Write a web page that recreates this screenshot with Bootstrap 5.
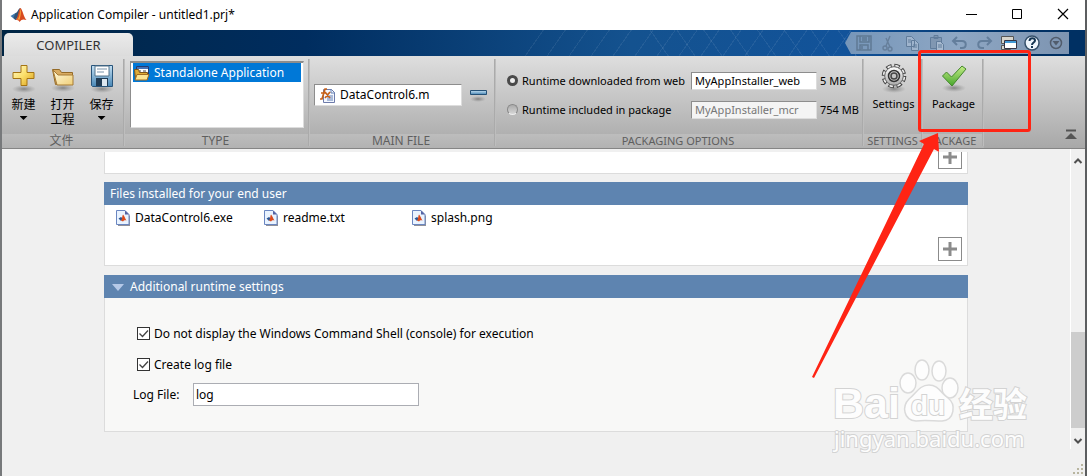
<!DOCTYPE html>
<html lang="zh-CN">
<head>
<meta charset="utf-8">
<meta name="viewport" content="width=device-width, initial-scale=1">
<title>Application Compiler - untitled1.prj*</title>
<link href="https://cdn.jsdelivr.net/npm/bootstrap@5.3.0/dist/css/bootstrap.min.css" rel="stylesheet">
<style>
body{font-family:"Noto Sans","Noto Sans CJK SC",sans-serif;font-size:12px;line-height:16px;color:#000;background:#f0f0f0}
button,input{font-family:inherit;color:inherit}
button{background:none;border:0;padding:0}
svg{display:block;flex:none}
.app-window{border-left:2px solid #77797b;border-right:2px solid #5c5e60;overflow:hidden}
.title-bar{height:30px}
.win-btn{width:46px;height:30px}
.tab-strip{height:26px;padding-left:2px;background:
 repeating-linear-gradient(55deg,transparent 0 21px,#ffffff12 21px 22px) 640px 0/220px 26px no-repeat,
 repeating-linear-gradient(125deg,transparent 0 17px,#ffffff12 17px 18px) 520px 0/350px 26px no-repeat,
 linear-gradient(90deg,#002544 0,#002d5f 28%,#14528f 58%,#12539a 78%,#003063 94%)}
.main-tab{width:129px;height:23px;background:linear-gradient(#ebebeb,#dcdcdc);border-radius:5px 5px 0 0;font-size:13px;color:#333}
.quick-bar{height:22px;width:224px;margin-right:16px;padding:0 2px 0 7px;background:linear-gradient(90deg,#7696b9,#8ea7c4 50%,#7d94b1);clip-path:polygon(0 50%,6px 0,100% 0,100% 100%,6px 100%)}
.quick-bar button{width:24px;height:22px}
.ribbon{height:93px;background:linear-gradient(#dedede,#c6c6c6 45%,#a8a8a8);border-bottom:1px solid #858585}
.group{position:relative}
.group::after{content:"";position:absolute;right:0;top:3px;bottom:2px;width:2px;background:linear-gradient(90deg,#a1a1a1,#c7c7c7)}
.group-body{height:78px}
.group-name{height:14px;line-height:13px;text-align:center;padding-right:4px;color:#5f5f5f;background:linear-gradient(#bdbdbd,#b2b2b2)}
.g-file{width:123px}.g-type{width:185px}.g-main{width:186px}.g-pack{width:368px}.g-set{width:59px}.g-go{width:61px}
.g-file .group-body{padding:8px 0 0 2px}
.g-type .group-body{padding:5px 0 0 5px}
.g-pack .group-body{padding:10px 0 0 11px}
.g-pack,.g-set,.g-go{font-size:11px}
.g-set .group-name,.g-go .group-name{padding-right:2px}
.tool{width:39px;line-height:15px}
.caret{width:8px;height:4px;background:#000;clip-path:polygon(0 0,100% 0,50% 100%)}
.sunken{background:#fff;border:1px solid #8d8d8d;border-bottom-color:#ddd;border-right-color:#ddd;border-radius:0}
.type-list{height:67px;width:174px;padding:0 2px;border-width:2px 1px 1px}
.type-item{background:#0078d7;color:#fff;width:100%;height:19px}
.file-box{width:148px;height:22px}
.file-box input{width:116px;border:0;outline:0;background:none;padding:0}
.opt-row{height:29px;gap:3px}
.opt-row label{width:166px;white-space:nowrap}
.opt-row input[type=text]{width:126px;height:18px;padding:0 3px}
.opt-row input[type=text]:disabled{background:#f4f4f4;color:#777}
.opt-row input[type=radio]{appearance:none;width:11px;height:11px;border:1px solid #888;border-radius:50%;background:linear-gradient(#aaa,#d7d7d7);border-bottom-color:#eee;margin:0 4px 0 0}
.opt-row input[type=radio]:checked{border:3px solid #4a4a4a;background:#eee}
.workspace{height:calc(100vh - 149px);min-height:327px;position:relative}
.pane{padding:3px 102px 0;min-width:0}
.box{background:#fff;border:1px solid #dcdcdc;border-top:0}
.head{height:23px;background:#5e84b0;color:#fff;font-size:12px;font-weight:400;line-height:16px;padding:1px 0 0 6px}
.add-btn{width:24px;height:24px;border:1px solid #8b8b8b;background:#fff;margin-right:5px}
.box-top{height:22px}.box-files{height:61px;margin-bottom:9px}
.box-set{height:134px;background:#f8f8f7;padding:20px 0 0 28px}
.file-row{padding:5px 0 0 11px}
.file-item{width:148px;gap:5px}
.check-row{height:31px;padding-left:4px;gap:4px}
.check-row input{appearance:none;width:13px;height:13px;margin:0;border:1px solid #333;background:#fff}
.check-row input:checked{background:#fff url("data:image/svg+xml,%3Csvg xmlns='http://www.w3.org/2000/svg' viewBox='0 0 11 11'%3E%3Cpath d='M1.5 5.5l3 3L10 2.5' fill='none' stroke='%23444' stroke-width='1.3'/%3E%3C/svg%3E")}
.log-row{padding-top:3px}
.log-label{width:60px}
.log-input{width:226px;height:23px;border:1px solid #abadb3;background:#fff;padding:0 2px;font-size:12px}
.scroller{width:15px;height:300px;border-left:1px solid #fff}
.thumb{height:96px;background:#cdcdcd}
.scroller button{height:21px;width:100%}
.callout{position:absolute;left:-112px;top:-7px;z-index:5;pointer-events:none}
.stamp{position:absolute;right:53px;bottom:20px}
.stamp text{paint-order:stroke;stroke:#d3d3d3;stroke-width:2px;fill:#fdfdfd}
.grip{position:absolute;right:1px;bottom:1px}
</style>
</head>
<body>
<svg width="0" height="0" class="position-absolute">
 <defs>
  <linearGradient id="gold" x2="1" y2="1"><stop stop-color="#fffbd0"/><stop offset=".5" stop-color="#fbdf69"/><stop offset="1" stop-color="#d79b19"/></linearGradient>
  <linearGradient id="pale" x2="1" y2="1"><stop stop-color="#fffbe0"/><stop offset="1" stop-color="#f0cf78"/></linearGradient>
  <linearGradient id="blue" y2="1" x2="0"><stop stop-color="#c5e0f2"/><stop offset="1" stop-color="#4887b6"/></linearGradient>
  <linearGradient id="green" y2="1" x2="0"><stop stop-color="#c5ed87"/><stop offset="1" stop-color="#46a62b"/></linearGradient>
  <linearGradient id="steel" y2="1" x2="0"><stop stop-color="#fff"/><stop offset="1" stop-color="#aaa"/></linearGradient>
  <radialGradient id="shade"><stop stop-color="#555" stop-opacity=".6"/><stop offset="1" stop-color="#777" stop-opacity="0"/></radialGradient>
  <symbol id="peak" viewBox="0 0 16 16"><path d="M0 9l5-3 3 3-3 4z" fill="#3c78ad"/><path d="M5 6c2 0 3-5 5-5L8 9l-3 4-2-2z" fill="#315476"/><path d="M10 1c2 1 3 9 6 12-3-1-5-1-7 2-1-2-2-2-4-2 3-2 3-12 5-12z" fill="#d84b20"/><path d="M10 2c1 2 0 8-1 11-1-1-2 0-3 0 3-2 3-6 4-11z" fill="#f5a23b"/></symbol>
  <symbol id="doc" viewBox="0 0 14 16"><path d="M2 2h8l4 4v10H2z" fill="#909098"/><path d="M.5.5h8.500l4 4v10H.5z" fill="#e9f3ff" stroke="#6a86c1"/><path d="M9 .5v4h4z" fill="#5362a3"/><path d="M2.500 8.500L5 7l2 1.500L5 11z" fill="#2b5794"/><path d="M7 4.500c1.500 1.500 2 4 3.500 6-1.500-.5-2.500-.5-3.500 1L5 10.500c1.500-1.500 1-4.500 2-6z" fill="#dc4a1c"/></symbol>
 </defs>
</svg>

<div class="app-window d-flex flex-column min-vh-100">
 <header class="title-bar bg-white d-flex align-items-center">
  <svg width="17" height="16" class="ms-2 me-1"><use href="#peak"/></svg>
  <span class="flex-grow-1">Application Compiler - untitled1.prj*</span>
  <button class="win-btn" aria-label="Minimize"><svg width="46" height="30"><path d="M19 14.500h11" stroke="#000"/></svg></button>
  <button class="win-btn" aria-label="Maximize"><svg width="46" height="30"><path d="M19.500 9.500h9v9h-9z" fill="none" stroke="#000"/></svg></button>
  <button class="win-btn" aria-label="Close"><svg width="46" height="30"><path d="M19 9l10 10M29 9L19 19" stroke="#000" stroke-width="1.200"/></svg></button>
 </header>

 <nav class="tab-strip d-flex align-items-end justify-content-between">
  <button class="main-tab">COMPILER</button>
  <div class="quick-bar d-flex align-self-center">
   <button aria-label="Save"><svg width="24" height="22" fill="none" stroke="#5f7994" stroke-width="1.500"><path d="M5 4h14v14H5zM8 4v6h9V4M8 18v-5h8v5M10 6h5M10 8h5M10 14v3"/></svg></button>
   <button aria-label="Cut"><svg width="24" height="22" fill="none" stroke="#667f9b" stroke-width="1.400"><path d="M14 4l-4 10M10 6l4 9"/><circle cx="9" cy="16" r="2"/><circle cx="14" cy="17" r="2"/></svg></button>
   <button aria-label="Copy"><svg width="24" height="22" fill="#9fb4cd" stroke="#617c9b"><path d="M6.500 4.500h5l3 3v7h-8zM11.500 8.500h4l3 3v7h-7zM8 8h3M8 10h3M13 13h4M13 15h4"/></svg></button>
   <button aria-label="Paste"><svg width="24" height="22" fill="#8097b2" stroke="#617c9b"><path d="M6.500 5.500h11v11h-11zM10 3.500h4v3h-4z"/><path d="M12.500 9.500h4l3 3v6h-7z" fill="#a7bad0"/><path d="M14 13h4M14 15h4"/></svg></button>
   <button aria-label="Undo"><svg width="24" height="22" fill="none" stroke="#637e9c" stroke-width="2"><path d="M9 5L5 9l4 4M6 9h8c5 0 5 7 0 7h-2"/></svg></button>
   <button aria-label="Redo"><svg width="24" height="22" fill="none" stroke="#637e9c" stroke-width="2"><path d="M15 5l4 4-4 4M18 9h-8c-5 0-5 7 0 7h2"/></svg></button>
   <button aria-label="Windows"><svg width="24" height="22"><path d="M5.500 4.500h12v7h-12zM5.500 13.500h9v4h-9z" fill="#d8d5cc" stroke="#555"/><path d="M8.500 8.500h12v8h-12z" fill="#fff" stroke="#334"/><path d="M9 9h11v2H9z" fill="#4299d5"/></svg></button>
   <button aria-label="Help"><svg width="24" height="22"><circle cx="12" cy="11" r="7" fill="#eef5fc" stroke="#35506b" stroke-width="1.500"/><path d="M9.500 9c0-4 5.500-3.500 5.500-.5 0 2-3 2-3 4.500M12 14v2" fill="none" stroke="#163653" stroke-width="2"/></svg></button>
   <button aria-label="More"><svg width="24" height="22"><circle cx="12" cy="11" r="5.500" fill="none" stroke="#515c6c" stroke-width="1.500"/><path d="M8.500 9h7L12 13.500z" fill="#515c6c"/></svg></button>
  </div>
 </nav>

 <section class="ribbon d-flex flex-shrink-0">
  <div class="group g-file flex-shrink-0">
   <div class="group-body d-flex">
    <button class="tool d-flex flex-column align-items-center"><svg width="28" height="33"><ellipse cx="14" cy="25" rx="12" ry="4" fill="url(#shade)"/><path d="M11 1.500h6v7h7v6h-7v7h-6v-7H3v-6h8z" fill="url(#gold)" stroke="#a57413"/></svg><span>新建</span><i class="caret mt-1"></i></button>
    <button class="tool d-flex flex-column align-items-center"><svg width="28" height="33"><ellipse cx="14" cy="24" rx="12" ry="4" fill="url(#shade)"/><path d="M3.500 5.500h7l2 3h11v12h-17z" fill="#d9ac62" stroke="#946a27"/><path d="M4 6l5 5h15v10H8z" fill="url(#pale)" stroke="#a67a35"/></svg><span>打开<br>工程</span></button>
    <button class="tool d-flex flex-column align-items-center"><svg width="28" height="33"><ellipse cx="14" cy="25" rx="12" ry="4" fill="url(#shade)"/><path d="M3.500 1.500h21v21h-20l-1-1z" fill="url(#blue)" stroke="#28547a"/><path d="M7 2h14v10H7z" fill="#fff" stroke="#54758c"/><path d="M9 5h10M9 8h7" stroke="#7993aa"/><path d="M8 14h12v8H8z" fill="#203b53"/><path d="M14 15h5v7h-5z" fill="#dde7ef"/></svg><span>保存</span><i class="caret mt-1"></i></button>
   </div>
   <div class="group-name">文件</div>
  </div>
  <div class="group g-type flex-shrink-0">
   <div class="group-body"><div class="sunken type-list">
    <button class="type-item d-flex align-items-center gap-1"><svg width="17" height="16"><path d="M3.500 1.500h12v8h-12z" fill="#fff" stroke="#253b72"/><path d="M4 2h11v2H4z" fill="#4572b6"/><path d="M6 6h2M10 6h3" stroke="#444"/><path d="M1.500 4.500h4l1 3h8v7h-12z" fill="#e0ac36" stroke="#80551a"/><path d="M4 9.500h12L14 15H2z" fill="#fce593" stroke="#a36c20"/></svg>Standalone Application</button>
   </div></div>
   <div class="group-name">TYPE</div>
  </div>
  <div class="group g-main flex-shrink-0">
   <div class="group-body d-flex align-items-center gap-2 ps-1">
    <label class="sunken file-box d-flex align-items-center gap-1 ps-1"><svg width="17" height="17"><path d="M4.500 2.500h8l3 3v10h-11z" fill="#f3f7ff" stroke="#6d7baa"/><path d="M12 2v4h4M8 9h6M8 11h6M8 13h6" stroke="#6380b5" fill="none"/><path d="M1 12h2L6 2h2M2 6h5M6 5l5 6M11 5l-5 6" stroke="#c76119" stroke-width="1.700" fill="none"/></svg><input type="text" value="DataControl6.m" aria-label="Main file"></label>
    <button aria-label="Remove file"><svg width="17" height="14"><ellipse cx="8" cy="11" rx="8" ry="3" fill="url(#shade)"/><path d="M.5 2.500h16v4H.5z" fill="url(#blue)" stroke="#245177"/></svg></button>
   </div>
   <div class="group-name">MAIN FILE</div>
  </div>
  <div class="group g-pack flex-shrink-0">
   <div class="group-body">
    <div class="opt-row d-flex align-items-center"><div class="d-flex align-items-center"><input type="radio" id="web" name="runtime" checked><label for="web">Runtime downloaded from web</label></div><input class="sunken" type="text" value="MyAppInstaller_web" aria-label="Web installer name"><span>5 MB</span></div>
    <div class="opt-row d-flex align-items-center"><div class="d-flex align-items-center"><input type="radio" id="mcr" name="runtime"><label for="mcr">Runtime included in package</label></div><input class="sunken" type="text" value="MyAppInstaller_mcr" aria-label="Package installer name" disabled><span class="text-nowrap">754 MB</span></div>
   </div>
   <div class="group-name">PACKAGING OPTIONS</div>
  </div>
  <div class="group g-set flex-shrink-0">
   <div class="group-body pt-1"><button class="d-flex flex-column align-items-center w-100"><svg width="30" height="36"><ellipse cx="15" cy="29" rx="12" ry="4" fill="url(#shade)"/><circle cx="15" cy="16" r="10.500" fill="none" stroke="#444" stroke-width="3.600" stroke-dasharray="5.500 2.750"/><circle cx="15" cy="16" r="10.300" fill="none" stroke="#eee" stroke-width="2" stroke-dasharray="3.500 4.590" stroke-dashoffset="-1"/><circle cx="15" cy="16" r="9.300" fill="url(#steel)" stroke="#666"/><circle cx="15" cy="16" r="5.500" fill="#ccc" stroke="#333" stroke-width="1.500"/><circle cx="15" cy="16" r="3" fill="#c4c4c4" stroke="#444" stroke-width="1.500"/></svg>Settings</button></div>
   <div class="group-name">SETTINGS</div>
  </div>
  <div class="group g-go flex-shrink-0">
   <div class="group-body pt-1"><button class="d-flex flex-column align-items-center w-100"><svg width="30" height="36"><ellipse cx="15" cy="28" rx="12" ry="4" fill="url(#shade)"/><path d="M3.500 16l4-4 5 5L23 6l4 3-14 17z" fill="url(#green)" stroke="#43872c"/></svg>Package</button></div>
   <div class="group-name">PACKAGE</div>
   <svg class="callout" width="222" height="332"><rect x="108.500" y="2.500" width="110" height="79" rx="2" fill="none" stroke="#ff2414" stroke-width="3"/><path d="M127 84l1 19-5-3L3 329l-2-1L113 95l-5-3z" fill="#ff2414"/></svg>
  </div>
  <div class="flex-grow-1 d-flex align-items-end justify-content-end p-2 pe-1"><button class="me-1" aria-label="Collapse ribbon"><svg width="12" height="11"><path d="M1 1.500h10" stroke="#555" stroke-width="2"/><path d="M0 10l6-6 6 6z" fill="#555"/></svg></button></div>
 </section>

 <div class="workspace d-flex flex-grow-1">
  <main class="pane flex-grow-1">
   <div class="box box-top d-flex justify-content-end overflow-hidden mb-2 align-items-end pb-1"><button class="add-btn flex-shrink-0" aria-label="Add file"><svg width="22" height="22"><path d="M11 4v14M4 11h14" stroke="#8b8b8b" stroke-width="3"/></svg></button></div>
   <h2 class="head d-flex align-items-center mb-0">Files installed for your end user</h2>
   <div class="box box-files d-flex flex-column justify-content-between pb-1">
    <div class="file-row d-flex">
     <div class="file-item d-flex"><svg width="14" height="16"><use href="#doc"/></svg>DataControl6.exe</div>
     <div class="file-item d-flex"><svg width="14" height="16"><use href="#doc"/></svg>readme.txt</div>
     <div class="file-item d-flex"><svg width="14" height="16"><use href="#doc"/></svg>splash.png</div>
    </div>
    <button class="add-btn align-self-end" aria-label="Add installed file"><svg width="22" height="22"><path d="M11 4v14M4 11h14" stroke="#8b8b8b" stroke-width="3"/></svg></button>
   </div>
   <h2 class="head d-flex align-items-center mb-0 gap-1"><svg width="16" height="12"><path d="M2 3h12L8 10z" fill="#b5c9e8"/></svg>Additional runtime settings</h2>
   <div class="box box-set">
    <div class="check-row d-flex align-items-center"><input type="checkbox" id="shell" checked><label for="shell">Do not display the Windows Command Shell (console) for execution</label></div>
    <div class="check-row d-flex align-items-center"><input type="checkbox" id="mklog" checked><label for="mklog">Create log file</label></div>
    <div class="log-row d-flex align-items-center"><label class="log-label" for="log">Log File:</label><input class="log-input" id="log" type="text" value="log"></div>
   </div>
  </main>
  <div class="scroller d-flex flex-column flex-shrink-0">
   <button aria-label="Scroll up"><svg width="14" height="21"><path d="M3.500 14L7 10.500l3.500 3.500" fill="none" stroke="#505050" stroke-width="2"/></svg></button>
   <div class="thumb mt-auto"></div>
   <button aria-label="Scroll down"><svg width="14" height="21"><path d="M3.500 11L7 14.500l3.500-3.500" fill="none" stroke="#505050" stroke-width="2"/></svg></button>
  </div>
  <svg class="stamp" width="200" height="100" font-family="Liberation Sans, sans-serif">
   <g fill="#fdfdfd" stroke="#dadada" stroke-width="1.500"><ellipse cx="76" cy="27" rx="8" ry="10"/><ellipse cx="90" cy="14" rx="7" ry="10"/><ellipse cx="107" cy="15" rx="7" ry="10"/><ellipse cx="118" cy="32" rx="8" ry="10"/><path d="M97 29c9 0 12 8 19 13 8 6 7 22-6 23-8 0-18-1-26 0-13-1-14-15-7-22 7-5 10-14 20-14z"/></g>
   <text x="1" y="62" font-size="43" font-weight="bold">Bai</text><text x="79" y="59" font-size="28" font-weight="bold">du</text>
   <text x="127" y="61" font-size="34" font-weight="bold" font-family="Noto Sans CJK SC, sans-serif">经验</text>
   <text x="2" y="91" font-size="22" font-family="Noto Sans, sans-serif">jingyan.baidu.com</text>
  </svg>
  <svg class="grip" width="12" height="12" fill="#b8b5a0"><path d="M9 1h2v2H9zM5 5h2v2H5zM9 5h2v2H9zM1 9h2v2H1zM5 9h2v2H5zM9 9h2v2H9z"/></svg>
 </div>
</div>
<script src="https://cdn.jsdelivr.net/npm/bootstrap@5.3.0/dist/js/bootstrap.bundle.min.js"></script>
</body>
</html>
